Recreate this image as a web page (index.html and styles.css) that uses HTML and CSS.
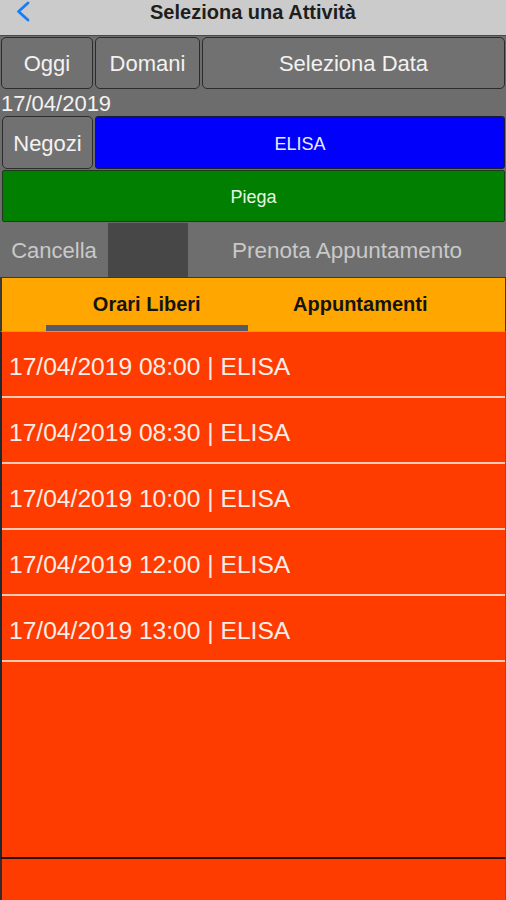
FILE: index.html
```html
<!DOCTYPE html>
<html>
<head>
<title>Seleziona una Attività</title>
<link rel="stylesheet" href="styles.css">
</head>
<body>
  <div class="screen">
    <header class="navbar">
      <svg class="back" width="16" height="22" viewBox="0 0 16 22">
        <path d="M13 3 L3.5 11.5 L13 20" fill="none" stroke="#1a7cf5" stroke-width="2.8" stroke-linecap="round" stroke-linejoin="round"/>
      </svg>
      <span class="title">Seleziona una Attività</span>
    </header>

    <div class="date-buttons">
      <button class="btn btn-oggi">Oggi</button>
      <button class="btn btn-domani">Domani</button>
      <button class="btn btn-data">Seleziona Data</button>
    </div>

    <div class="date-label">17/04/2019</div>

    <div class="shop-row">
      <button class="btn btn-negozi">Negozi</button>
      <div class="operator">ELISA</div>
    </div>

    <div class="service">Piega</div>

    <div class="actions">
      <button class="action action-cancel">Cancella</button>
      <div class="action-gap"></div>
      <button class="action action-book">Prenota Appuntamento</button>
    </div>

    <div class="tabs">
      <div class="tab active">Orari Liberi</div>
      <div class="tab">Appuntamenti</div>
    </div>

    <div class="slots">
      <ul class="slot-list">
        <li>17/04/2019 08:00 | ELISA</li>
        <li>17/04/2019 08:30 | ELISA</li>
        <li>17/04/2019 10:00 | ELISA</li>
        <li>17/04/2019 12:00 | ELISA</li>
        <li>17/04/2019 13:00 | ELISA</li>
      </ul>
    </div>
    <div class="bottom-bar"></div>
  </div>
</body>
</html>
```

FILE: styles.css
```css
body {
  margin: 0;
  font-family: "Liberation Sans", Arial, sans-serif;
  background-color: #6e6d6d;
}
.screen {
  width: 506px;
  height: 900px;
  display: flex;
  flex-direction: column;
  overflow: hidden;
}
.navbar {
  position: relative;
  height: 35px;
  background-color: #cbcbcb;
  border-bottom: 1px solid #4a4a4a;
  display: flex;
  justify-content: center;
  flex-shrink: 0;
}
.navbar .back {
  position: absolute;
  left: 15px;
  top: 0;
}
.title {
  font-size: 20px;
  font-weight: bold;
  color: #1e1e1e;
  line-height: 24px;
}
.btn {
  font-family: inherit;
  background-color: #727171;
  color: #f2f2f2;
  border: 1px solid #2c2c2c;
  border-radius: 5px;
  padding: 2px 0 0 0;
  font-size: 22px;
}
.date-buttons {
  display: flex;
  gap: 2px;
  padding: 1px 1px 0 1px;
  height: 52px;
}
.btn-oggi {
  width: 92px;
}
.btn-domani {
  width: 105px;
}
.btn-data {
  flex: 1;
}
.date-label {
  height: 27px;
  line-height: 29px;
  font-size: 22px;
  color: #f2f2f2;
  padding-left: 1px;
}
.shop-row {
  display: flex;
  gap: 2px;
  padding: 0 1px 0 2px;
  height: 53px;
}
.btn-negozi {
  width: 91px;
}
.operator {
  flex: 1;
  background-color: #0000fb;
  border: 1px solid #1a1a3a;
  border-radius: 3px;
  color: #ececff;
  font-size: 18px;
  padding-top: 3px;
  display: flex;
  align-items: center;
  justify-content: center;
}
.service {
  margin: 1px 1px 0 2px;
  height: 47px;
  padding-top: 3px;
  background-color: #007f00;
  border: 1px solid #1c3a1c;
  border-radius: 2px;
  color: #e6f6e6;
  font-size: 18px;
  display: flex;
  align-items: center;
  justify-content: center;
}
.actions {
  display: flex;
  height: 54px;
  margin-top: 1px;
}
.action {
  font-family: inherit;
  border: none;
  padding: 2px 0 0 0;
  background-color: #6f6e6e;
  color: #c9c9c9;
  font-size: 22px;
}
.action-cancel {
  width: 108px;
}
.action-gap {
  width: 80px;
  background-color: #474747;
}
.action-book {
  flex: 1;
  font-size: 22.5px;
}
.tabs {
  display: flex;
  height: 53px;
  padding: 0 38px;
  background-color: #ffa600;
  border: 1px solid #3a3a3a;
  border-left-width: 2px;
  border-bottom: 1px solid #f08060;
}
.tab {
  flex: 1;
  display: flex;
  align-items: center;
  justify-content: center;
  font-size: 20px;
  font-weight: bold;
  color: #141414;
  margin: 0 6px;
  padding-top: 6px;
  border-bottom: 6px solid transparent;
}
.tab.active {
  border-bottom-color: #555a66;
}
.slots {
  flex: 1;
  background-color: #ff3c00;
  border-left: 2px solid #1b2732;
  border-right: 1px solid #c83a14;
  border-bottom: 2px solid #2a1008;
}
.slot-list {
  list-style: none;
  margin: 0;
  padding: 0;
}
.slot-list li {
  height: 64px;
  line-height: 69px;
  padding-left: 7px;
  font-size: 24.6px;
  color: #fbeee8;
  border-bottom: 2px solid #ffc9b8;
}
.bottom-bar {
  height: 41px;
  flex-shrink: 0;
  background-color: #ff3c00;
  border-left: 2px solid #3a2a28;
  border-right: 1px solid #c83a14;
}
```
